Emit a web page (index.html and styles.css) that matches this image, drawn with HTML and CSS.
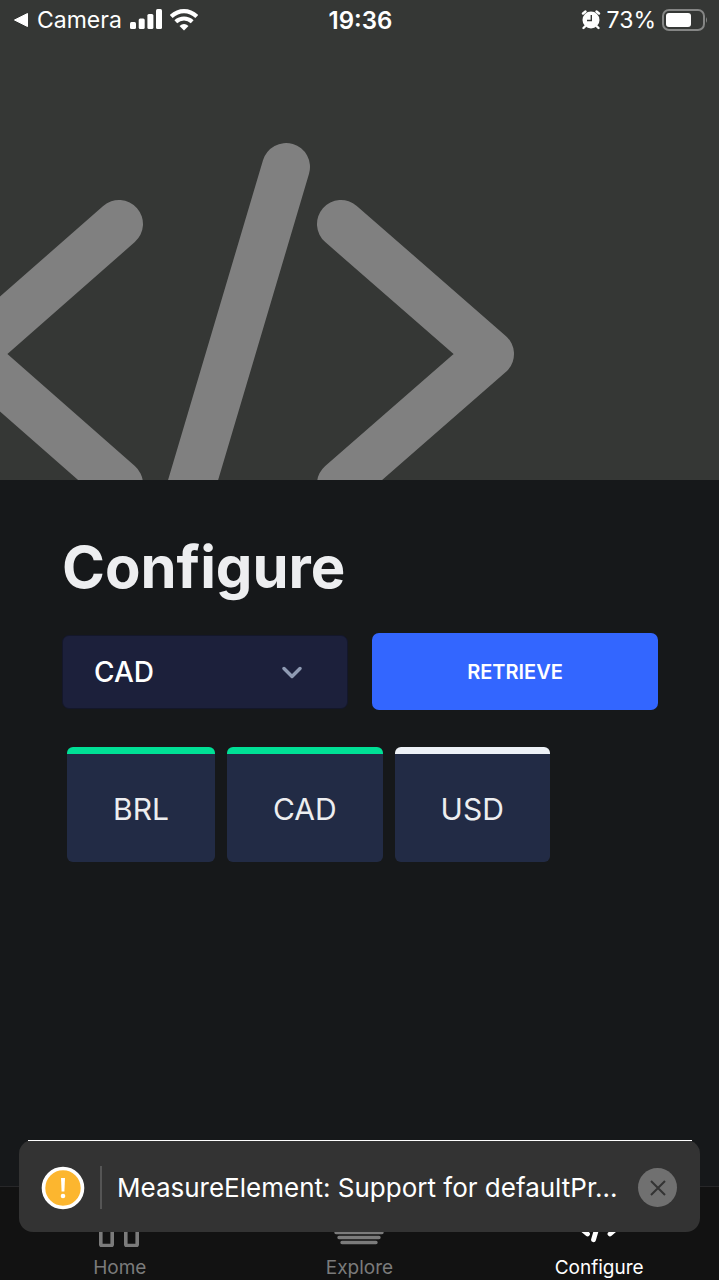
FILE: index.html
```
<!DOCTYPE html>
<html lang="en">
<head>
<meta charset="utf-8">
<meta name="viewport" content="width=device-width, initial-scale=1">
<title>Configure</title>
<link rel="stylesheet" href="styles.css">
</head>
<body>
<header class="hero">
  <div class="status">
    <a class="status-group" href="#">
      <svg width="16" height="16" viewBox="0 0 16 16" aria-hidden="true"><path d="M1.500 8 14.500 1.500v13z" fill="#fff" stroke="#fff" stroke-linejoin="round"/></svg>
      <span class="back">Camera</span>
      <svg width="32" height="22" viewBox="0 0 32 22" fill="#fff" aria-hidden="true"><rect y="13" width="6" height="7" rx="1.500"/><rect x="8.700" y="9.500" width="6" height="10.500" rx="1.500"/><rect x="17.400" y="5" width="6" height="15" rx="1.500"/><rect x="26" y="0" width="6" height="20" rx="1.500"/></svg>
      <svg width="28" height="22" viewBox="1 0 28 22" aria-hidden="true"><g fill="none" stroke="#fff" stroke-width="4.200"><path d="M2.200 7.500Q8 2.100 15 2.100T27.800 7.500"/><path d="M6.800 12.700Q10.400 9.500 15 9.500T23.200 12.700"/></g><path d="M10.500 17Q15 13.200 19.500 17L15 21.400z" fill="#fff"/></svg>
    </a>
    <time class="clock">19:36</time>
    <div class="status-group status-end">
      <svg width="20" height="20" viewBox="0 0 20 20" aria-hidden="true"><circle cx="10" cy="10" r="8.500" fill="#fff"/><path d="M2 3.500 4.500 1.500M18 3.500l-2.500-2M4 16.500l-1.500 1.500M16 16.500l1.500 1.500" stroke="#fff" stroke-width="2.400" stroke-linecap="round"/><path d="M10.300 5v5.500H6" fill="none" stroke="#353735" stroke-width="1.400"/></svg>
      <span class="percent">73%</span>
      <svg width="46" height="22" viewBox="0 0 46 22" aria-hidden="true"><rect x="1" y="1" width="41" height="20" rx="6" fill="none" stroke="#858685" stroke-width="2"/><rect x="4" y="4" width="25" height="14" rx="3" fill="#fff"/><path d="M44 8q2 3 0 6z" fill="#858685"/></svg>
    </div>
  </div>
  <svg class="hero-art" viewBox="0 40 719 440" preserveAspectRatio="xMinYMin slice" aria-hidden="true"><path d="M119 224-29 354l148 130M286 167 175 541M341 224l149 130-149 130" fill="none" stroke="#808080" stroke-width="48" stroke-linecap="round" stroke-linejoin="round"/></svg>
</header>
<main class="content">
  <h1 class="title">Configure</h1>
  <form class="controls">
    <div class="picker">
      <select class="select" aria-label="Currency"><option>CAD</option><option>BRL</option><option>USD</option></select>
      <svg class="chevron" width="20" height="14" viewBox="0 0 20 14" aria-hidden="true"><path d="m2 3.500 8 8 8-8" fill="none" stroke="#8f9bb3" stroke-width="3.400" stroke-linecap="round" stroke-linejoin="round"/></svg>
    </div>
    <button class="retrieve" type="button">RETRIEVE</button>
  </form>
  <div class="cards">
    <button class="card" type="button">BRL</button>
    <button class="card" type="button">CAD</button>
    <button class="card card-basic" type="button">USD</button>
  </div>
</main>
<nav class="tabs">
  <a class="tab" href="#"><svg width="52" height="52" viewBox="0 0 52 52" fill="none" stroke="currentColor" stroke-width="3.600" stroke-linejoin="round" aria-hidden="true"><path d="M6.800 20v29.500q0 1 1 1h9.400q1 0 1-1V34h13.600v15.500q0 1 1 1h9.400q1 0 1-1V20L25 4z"/></svg>Home</a>
  <a class="tab" href="#"><svg width="52" height="52" viewBox="0 0 52 52" fill="none" stroke="currentColor" stroke-width="3.400" stroke-linecap="round" aria-hidden="true"><path d="M14 8h24M10 13h32M7 18h38M4 23h44M3 28h46M2 33h48M3 37.500h46M6 42.500h40M9 47.500h34"/></svg>Explore</a>
  <a class="tab tab-active" href="#"><svg width="52" height="52" viewBox="0 0 52 52" fill="none" stroke="currentColor" stroke-width="4.800" stroke-linecap="round" stroke-linejoin="round" aria-hidden="true"><path d="M14.500 13-1 26l15.500 13M31.500 7.300l-11 37.400M37 13l15 13-15 13"/></svg>Configure</a>
</nav>
<aside class="toast" role="alert">
  <svg class="warn" width="44" height="44" viewBox="0 0 44 44" aria-hidden="true"><circle cx="22" cy="22" r="19.500" fill="#fcb62f" stroke="#fff" stroke-width="3.600"/><path d="M20 12h4l-.6 13.500h-2.800z" fill="#fff"/><circle cx="22" cy="30" r="2.300" fill="#fff"/></svg>
  <p class="message">MeasureElement: Support for defaultPr...</p>
  <button class="close" type="button" aria-label="Dismiss"><svg width="16" height="16" viewBox="0 0 16 16" aria-hidden="true"><path d="m1 1 14 14M15 1 1 15" stroke="#333" stroke-width="2"/></svg></button>
</aside>
</body>
</html>
```
FILE: styles.css
```
* { box-sizing: border-box; }
body {
  margin: 0;
  min-height: 100vh;
  display: flex;
  flex-direction: column;
  background: #16181a;
  color: #edeef0;
  font-family: Inter, "Liberation Sans", sans-serif;
}
a { color: inherit; text-decoration: none; }
svg { display: block; flex: none; }
button, select { font: inherit; color: inherit; border: 0; margin: 0; }

.hero { background: #353735; }
.status {
  display: grid;
  grid-template-columns: 1fr auto 1fr;
  align-items: center;
  height: 40px;
  padding: 0 11px 0 13px;
  color: #fff;
  font-size: 23px;
}
.status-group { display: flex; align-items: center; gap: 8px; }
.status-end { justify-content: flex-end; gap: 6px; }
.clock { font-size: 24px; font-weight: 600; }
.hero-art { width: 100%; height: 440px; }

.content { flex: 1; padding: 51px 61px 0 62px; }
.title { margin: 0; font-size: 58px; line-height: 72px; font-weight: 700; }
.controls {
  display: grid;
  grid-template-columns: 1fr 1fr;
  align-items: center;
  gap: 24px;
  margin-top: 30px;
}
.picker { display: grid; align-items: center; }
.select {
  grid-area: 1 / 1;
  width: 100%;
  height: 74px;
  padding: 0 31px;
  appearance: none;
  background: #1c203b;
  border: 1px solid #14172a;
  border-radius: 7px;
  color: #fff;
  font-size: 28px;
  font-weight: 500;
}
.chevron { grid-area: 1 / 1; justify-self: end; margin-right: 46px; pointer-events: none; }
.retrieve {
  height: 77px;
  border-radius: 7px;
  background: #3366ff;
  color: #fff;
  font-size: 20px;
  font-weight: 600;
}
.cards { display: flex; flex-wrap: wrap; gap: 12px; margin: 37px 0 0 5px; }
.card {
  height: 115px;
  padding: 8px 46px 0;
  border-radius: 6px;
  background: linear-gradient(#00e096 7px, #222b45 7px);
  font-size: 30px;
}
.card-basic { background: linear-gradient(#edf1f7 7px, #222b45 7px); }

.tabs {
  display: grid;
  grid-template-columns: repeat(3, 1fr);
  padding-top: 8px;
  border-top: 1px solid #272729;
  background: #121212;
  color: #7b7b7b;
}
.tab {
  display: flex;
  flex-direction: column;
  align-items: center;
  gap: 9px;
  font-size: 19px;
  line-height: 24px;
}
.tab-active { color: #fff; }

.toast {
  position: fixed;
  left: 19px;
  right: 19px;
  bottom: 48px;
  height: 92px;
  display: flex;
  align-items: center;
  padding: 3px 23px 0 22px;
  border-radius: 14px;
  background: #333;
  color: #fff;
}
.toast::before {
  content: "";
  position: absolute;
  top: 0;
  left: 9px;
  right: 8px;
  height: 1px;
  background: #fff;
}
.message {
  flex: 1;
  min-width: 0;
  margin: 0 12px 0 15px;
  padding-left: 15px;
  border-left: 2px solid #555;
  font-size: 26px;
  line-height: 43px;
  white-space: nowrap;
  overflow: hidden;
  text-overflow: ellipsis;
}
.close {
  display: grid;
  place-items: center;
  width: 39px;
  height: 39px;
  padding: 0;
  border-radius: 50%;
  background: #707070;
}
```
